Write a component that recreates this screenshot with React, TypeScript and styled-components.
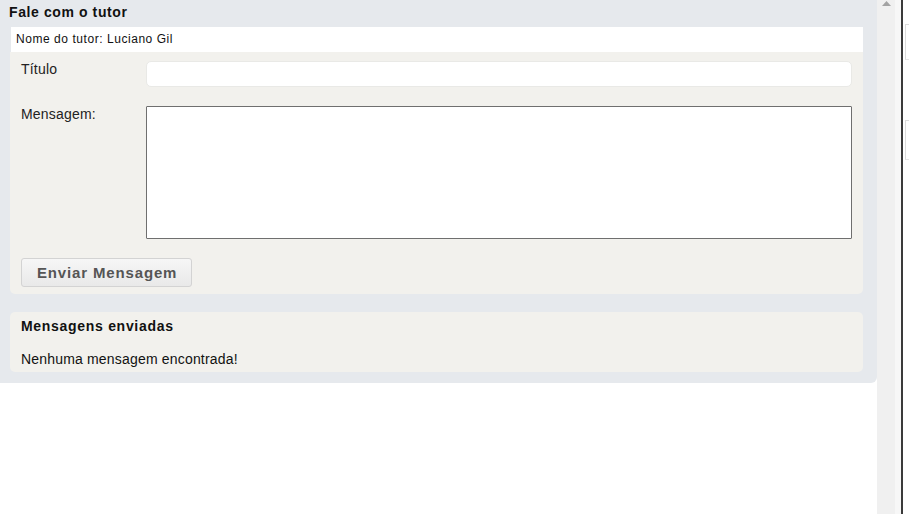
import React from "react";
import styled, { createGlobalStyle } from "styled-components";

const Global = createGlobalStyle`
  html, body { margin: 0; padding: 0; background: #ffffff; }
  body { font-family: "Liberation Sans", Arial, sans-serif; color: #111; }
  * { box-sizing: border-box; }
`;

const Page = styled.div`
  display: flex;
  height: 514px;
  width: 909px;
  overflow: hidden;
`;

const Main = styled.div`
  width: 877px;
  display: flex;
  flex-direction: column;
`;

const Panel = styled.section`
  background: #e6e9ed;
  border-bottom-right-radius: 6px;
  padding: 0 14px 11px 10px;
`;

const Title = styled.h2`
  margin: 0 0 0 -1px;
  padding: 4px 0 6px;
  font-size: 14px;
  line-height: 17px;
  font-weight: bold;
  letter-spacing: 0.6px;
  color: #111;
`;

const TutorRow = styled.div`
  background: #ffffff;
  height: 25px;
  line-height: 25px;
  margin-left: 1px;
  padding: 0 5px;
  font-size: 12px;
  letter-spacing: 0.55px;
  color: #111;
`;

const Box = styled.div<{ $round?: boolean }>`
  background: #f2f1ed;
  border-radius: ${(p) => (p.$round ? "5px" : "0 0 5px 5px")};
`;

const FormBox = styled(Box)`
  display: grid;
  grid-template-columns: 125px 706px;
  row-gap: 19px;
  padding: 9px 11px 7px 11px;
`;

const Label = styled.label`
  font-size: 14px;
  line-height: 16px;
  letter-spacing: 0.2px;
  color: #222;
`;

const TextInput = styled.input`
  height: 26px;
  width: 100%;
  border: 1px solid #e9e9e6;
  border-radius: 5px;
  background: #ffffff;
  outline: none;
  font-family: inherit;
  font-size: 14px;
`;

const TextArea = styled.textarea`
  height: 133px;
  width: 100%;
  border: 1px solid #6f6f6f;
  border-radius: 1px;
  background: #ffffff;
  resize: none;
  display: block;
  outline: none;
  font-family: inherit;
  margin: 0;
`;

const ButtonRow = styled.div`
  grid-column: 1 / -1;
`;

const SendButton = styled.button`
  height: 29px;
  width: 171px;
  padding: 0 0 0 15px;
  border: 1px solid #d3d3d3;
  border-radius: 3px;
  background: linear-gradient(#f6f6f6, #e9e9e9);
  color: #555;
  font-family: "Liberation Sans", Arial, sans-serif;
  font-weight: bold;
  font-size: 15px;
  letter-spacing: 0.85px;
  text-align: left;
  white-space: nowrap;
`;

const ListBox = styled(Box)`
  margin-top: 18px;
  padding: 6px 11px 5px;
`;

const ListTitle = styled.h3`
  margin: 0;
  font-size: 14px;
  line-height: 16px;
  font-weight: bold;
  letter-spacing: 0.7px;
  color: #111;
`;

const EmptyText = styled.p`
  margin: 17px 0 0;
  font-size: 14px;
  line-height: 16px;
  letter-spacing: 0.18px;
  color: #111;
`;

const Scrollbar = styled.div`
  width: 24px;
  height: 100%;
  background: linear-gradient(to right, #f0f0f0 0 18px, #f7f7f7 18px);
  display: flex;
  justify-content: flex-start;
  padding: 1px 0 0 5px;
`;

const Divider = styled.div`
  width: 2px;
  height: 100%;
  background: #3a3a3a;
`;

const Edge = styled.div`
  flex: 1;
  height: 100%;
  background: #ffffff;
  display: flex;
  flex-direction: column;
  padding-top: 24px;
  padding-left: 2px;
  gap: 60px;
`;

const EdgeMark = styled.div<{ $h: number }>`
  height: ${(p) => p.$h}px;
  border-left: 1px solid #dcdcdc;
  border-top: 1px solid #dcdcdc;
  border-bottom: 1px solid #e6e6e6;
`;

export default function App() {
  return (
    <Page>
      <Global />
      <Main>
        <Panel>
          <Title>Fale com o tutor</Title>
          <TutorRow>Nome do tutor: Luciano Gil</TutorRow>
          <FormBox>
            <Label htmlFor="titulo">Título</Label>
            <TextInput id="titulo" type="text" />
            <Label htmlFor="mensagem">Mensagem:</Label>
            <TextArea id="mensagem" />
            <ButtonRow>
              <SendButton type="button">Enviar Mensagem</SendButton>
            </ButtonRow>
          </FormBox>
          <ListBox $round>
            <ListTitle>Mensagens enviadas</ListTitle>
            <EmptyText>Nenhuma mensagem encontrada!</EmptyText>
          </ListBox>
        </Panel>
      </Main>
      <Scrollbar>
        <svg width="9" height="5" viewBox="0 0 9 5">
          <path d="M0 5 L4.5 0 L9 5 Z" fill="#a3a3a3" />
        </svg>
      </Scrollbar>
      <Divider />
      <Edge>
        <EdgeMark $h={36} />
        <EdgeMark $h={40} />
      </Edge>
    </Page>
  );
}
